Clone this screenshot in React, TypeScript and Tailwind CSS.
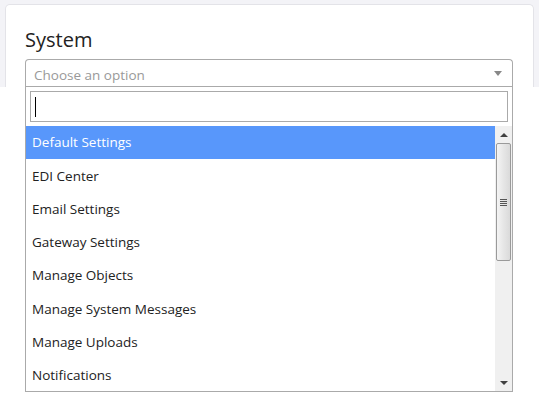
import React from 'react'

const options = [
  'Default Settings',
  'EDI Center',
  'Email Settings',
  'Gateway Settings',
  'Manage Objects',
  'Manage System Messages',
  'Manage Uploads',
  'Notifications',
]

const Scrollbar = () => (
  <div className="flex w-[17px] shrink-0 flex-col bg-[#f0f0f0]">
    <div className="flex h-[17px] items-center justify-center">
      <div className="h-0 w-0 border-x-[4px] border-b-[4px] border-x-transparent border-b-[#404040]" />
    </div>
    <div className="mx-px flex h-[118px] items-center justify-center rounded-[2px] border border-[#9a9a9a] bg-gradient-to-r from-[#f4f4f4] via-[#e6e6e6] to-[#dadada]">
      <div className="flex w-[7px] flex-col gap-px">
        <div className="h-px bg-[#555]" />
        <div className="h-px bg-[#555]" />
        <div className="h-px bg-[#555]" />
        <div className="h-px bg-[#555]" />
      </div>
    </div>
    <div className="flex-1" />
    <div className="flex h-[17px] items-center justify-center">
      <div className="h-0 w-0 border-x-[4px] border-t-[4px] border-x-transparent border-t-[#404040]" />
    </div>
  </div>
)

const App = () => {
  return (
    <div
      className="h-[396px] w-[539px] overflow-hidden bg-white"
      style={{ fontFamily: '"Open Sans", "Noto Sans", sans-serif' }}
    >
      <div className="h-[87px] bg-[#f3f3f7] px-[5px] pt-[4px]">
        <div className="h-[83px] rounded-t-[5px] border border-b-0 border-[#e3e3e8] bg-white px-[19px] pt-[21px]">
          <h2 className="text-[20px] leading-[28px] text-[#222]">System</h2>
        </div>
      </div>
      <div className="relative -mt-[28px] ml-[25px] w-[488px]">
        <div className="flex h-[27px] items-center justify-between rounded-t-[4px] border border-b-0 border-[#aaa] bg-white pt-[4px] pl-[8px] pr-[10px]">
          <span className="text-[13.5px] text-[#999]">Choose an option</span>
          <div className="-mt-[3px] h-0 w-0 border-x-[4px] border-t-[5px] border-x-transparent border-t-[#888]" />
        </div>
        <div className="border border-[#aaa] bg-white">
          <div className="px-[4px] pt-[4px] pb-[4px]">
            <div className="flex h-[31px] items-center border border-[#aaa] px-[4px]">
              <div className="h-[20px] w-px bg-black" />
            </div>
          </div>
          <div className="flex h-[265px]">
            <ul className="flex-1">
              {options.map((o, i) => (
                <li
                  key={o}
                  className={
                    i === 0
                      ? 'flex h-[33px] items-center bg-[#5897fb] px-[6px] text-[13.5px] text-white'
                      : 'flex h-[33.3px] items-center px-[6px] text-[13.5px] text-[#222]'
                  }
                >
                  {o}
                </li>
              ))}
            </ul>
            <Scrollbar />
          </div>
        </div>
      </div>
    </div>
  )
}

export default App
